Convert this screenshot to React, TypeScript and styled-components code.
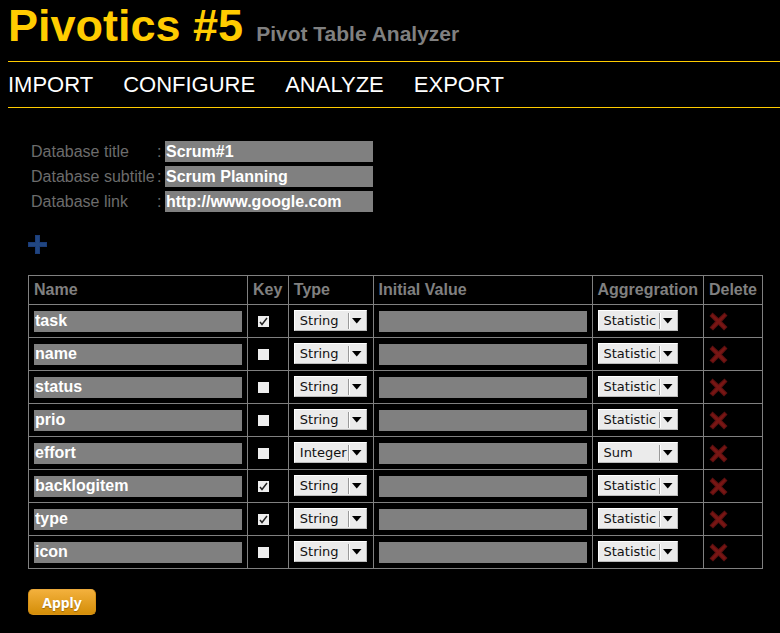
import React, { useState } from "react";
import styled, { createGlobalStyle } from "styled-components";

const GlobalStyle = createGlobalStyle`
  * { box-sizing: border-box; }
  body {
    margin: 0;
    background: #000;
    color: #808080;
    font-family: "Liberation Sans", Arial, sans-serif;
    font-size: 16px;
  }
`;

const Page = styled.div`
  padding-left: 8px;
`;

const Header = styled.header`
  display: flex;
  align-items: baseline;
  gap: 13px;
  height: 61px;
  white-space: nowrap;
`;

const Title = styled.h1`
  margin: 0;
  color: #ffcc00;
  font-size: 45px;
  line-height: 52px;
`;

const Subtitle = styled.h2`
  margin: 0;
  font-size: 21px;
`;

const Nav = styled.nav`
  display: flex;
  gap: 30px;
  padding: 10px 0;
  border: solid #ffcc00;
  border-width: 1px 0;
`;

const NavLink = styled.a`
  color: #fff;
  font-size: 22px;
  line-height: 25px;
  text-decoration: none;
`;

const Content = styled.form`
  padding: 33px 17px 18px 20px;
`;

const Fields = styled.div`
  display: grid;
  grid-template-columns: 124px 6px 208px;
  column-gap: 2px;
  row-gap: 4px;
  padding-left: 3px;
  color: #6c6c6c;
  line-height: 21px;
`;

const FieldLabel = styled.label`
  white-space: nowrap;
`;

const TextInput = styled.input`
  display: block;
  width: 208px;
  height: 21px;
  padding: 0 1px;
  border: 0;
  border-radius: 0;
  background: #808080;
  color: #fff;
  font: bold 16px "Liberation Sans", Arial, sans-serif;
`;

const IconButton = styled.button`
  display: block;
  padding: 0;
  border: 0;
  background: none;
  cursor: pointer;

  svg { display: block; }
`;

const AddRow = styled.div`
  padding: 23px 0 21px;
`;

const Table = styled.table`
  border-collapse: collapse;
`;

const HeadCell = styled.th<{ $width?: number }>`
  width: ${(p) => (p.$width ? `${p.$width}px` : "auto")};
  height: 29px;
  padding: 0 5px;
  border: 1px solid #808080;
  text-align: left;
  line-height: 18px;
`;

const Cell = styled.td`
  height: 33px;
  padding: 0 5px;
  border: 1px solid #808080;
`;

const Check = styled.input`
  appearance: none;
  display: block;
  width: 11px;
  height: 11px;
  margin: 0 0 0 5px;
  background: #eee;

  &:checked {
    background: #eee url("data:image/svg+xml,%3Csvg xmlns='http://www.w3.org/2000/svg' viewBox='0 0 11 11'%3E%3Cpath d='M2 6l2 2.500L9 2' fill='none' stroke='%23222' stroke-width='1.5'/%3E%3C/svg%3E");
  }
`;

const SelectBox = styled.div<{ $width: number }>`
  display: grid;
  grid-template-columns: 1fr 19px;
  align-items: center;
  width: ${(p) => p.$width}px;
  height: 21px;
  margin-bottom: 2px;
  border: 1px solid;
  border-color: #fff #bbb #bbb #fff;
  background: #ebebeb;
`;

const Select = styled.select`
  grid-area: 1 / 1 / 2 / 3;
  appearance: none;
  width: 100%;
  height: 19px;
  padding: 0 0 0 5px;
  border: 0;
  background: none;
  color: #111;
  font: 13px "DejaVu Sans", sans-serif;
`;

const SelectArrow = styled.svg`
  grid-area: 1 / 2 / 2 / 3;
  pointer-events: none;
`;

const Apply = styled.button`
  display: block;
  width: 68px;
  height: 26px;
  margin-top: 20px;
  padding: 0;
  border: 1px solid #d89216;
  border-top-color: #e9a83a;
  border-radius: 5px;
  background: linear-gradient(#f3b03c, #d48e08);
  color: #fff;
  font: bold 14px "Noto Sans", "Open Sans", sans-serif;
  text-shadow: 0 1px 1px rgba(0, 0, 0, 0.3);
  cursor: pointer;
`;

const PlusIcon = () => (
  <svg width="19" height="19" viewBox="0 0 19 19" aria-hidden="true">
    <path d="M7 0h5v7h7v5h-7v7H7v-7H0V7h7z" fill="#1b3c78" />
    <path d="M8 1h3v7h7v3h-7v7H8v-7H1V8h7z" fill="#214681" />
  </svg>
);

const DeleteIcon = () => (
  <svg width="19" height="19" viewBox="0 0 19 19" aria-hidden="true">
    <path d="M3.5 .5L9.5 6 15.5 .5 18.5 3.5 13 9.5 18.5 15 15 18.5 9.5 13 4 18.5 .5 15.5 6 9.5 .5 4z" fill="#5c1010" />
    <path d="M3.5 2L9.5 7.5 15.5 2 17 3.5 11.5 9.5 17 15 15 17 9.5 11.5 4 17 2 15.5 7.5 9.5 2 4z" fill="#781614" />
  </svg>
);

type DropdownProps = { label: string; options: string[]; initial: string; width: number };

const Dropdown = ({ label, options, initial, width }: DropdownProps) => (
  <SelectBox $width={width}>
    <Select aria-label={label} defaultValue={initial}>
      {options.map((o) => (
        <option key={o}>{o}</option>
      ))}
    </Select>
    <SelectArrow width="19" height="17" viewBox="0 0 19 17" aria-hidden="true">
      <path d="M1.5 1v16" stroke="#999" />
      <path d="M2.5 1v16" stroke="#fff" />
      <path d="M5 6h9.500L9.750 11.500z" fill="#000" />
    </SelectArrow>
  </SelectBox>
);

type Row = { name: string; isKey?: boolean; type?: string; aggregation?: string };

const initialRows: Row[] = [
  { name: "task", isKey: true },
  { name: "name" },
  { name: "status" },
  { name: "prio" },
  { name: "effort", type: "Integer", aggregation: "Sum" },
  { name: "backlogitem", isKey: true },
  { name: "type", isKey: true },
  { name: "icon" },
];

const fields = [
  { id: "db-title", label: "Database title", value: "Scrum#1" },
  { id: "db-subtitle", label: "Database subtitle", value: "Scrum Planning" },
  { id: "db-link", label: "Database link", value: "http://www.google.com" },
];

const columns = [
  { label: "Name" },
  { label: "Key", width: 41 },
  { label: "Type", width: 85 },
  { label: "Initial Value" },
  { label: "Aggregration" },
  { label: "Delete" },
];

export default function App() {
  const [rows, setRows] = useState(initialRows.map((row, id) => ({ ...row, id })));
  const addRow = () =>
    setRows([...rows, { name: "", id: Math.max(-1, ...rows.map((r) => r.id)) + 1 }]);

  return (
    <Page>
      <GlobalStyle />
      <Header>
        <Title>Pivotics #5</Title>
        <Subtitle>Pivot Table Analyzer</Subtitle>
      </Header>
      <Nav>
        {["IMPORT", "CONFIGURE", "ANALYZE", "EXPORT"].map((item) => (
          <NavLink key={item} href={`#${item.toLowerCase()}`}>{item}</NavLink>
        ))}
      </Nav>
      <Content onSubmit={(e) => e.preventDefault()}>
        <Fields>
          {fields.map((f) => (
            <React.Fragment key={f.id}>
              <FieldLabel htmlFor={f.id}>{f.label}</FieldLabel>
              <span>:</span>
              <TextInput id={f.id} defaultValue={f.value} />
            </React.Fragment>
          ))}
        </Fields>
        <AddRow>
          <IconButton type="button" aria-label="Add row" onClick={addRow}>
            <PlusIcon />
          </IconButton>
        </AddRow>
        <Table>
          <thead>
            <tr>
              {columns.map((c) => (
                <HeadCell key={c.label} scope="col" $width={c.width}>{c.label}</HeadCell>
              ))}
            </tr>
          </thead>
          <tbody>
            {rows.map((row) => (
              <tr key={row.id}>
                <Cell><TextInput aria-label="Name" defaultValue={row.name} /></Cell>
                <Cell><Check type="checkbox" aria-label="Key" defaultChecked={row.isKey} /></Cell>
                <Cell>
                  <Dropdown label="Type" options={["String", "Integer"]} initial={row.type ?? "String"} width={73} />
                </Cell>
                <Cell><TextInput aria-label="Initial value" /></Cell>
                <Cell>
                  <Dropdown label="Aggregation" options={["Statistic", "Sum"]} initial={row.aggregation ?? "Statistic"} width={80} />
                </Cell>
                <Cell>
                  <IconButton
                    type="button"
                    aria-label="Delete row"
                    onClick={() => setRows(rows.filter((r) => r.id !== row.id))}
                  >
                    <DeleteIcon />
                  </IconButton>
                </Cell>
              </tr>
            ))}
          </tbody>
        </Table>
        <Apply type="submit">Apply</Apply>
      </Content>
    </Page>
  );
}
